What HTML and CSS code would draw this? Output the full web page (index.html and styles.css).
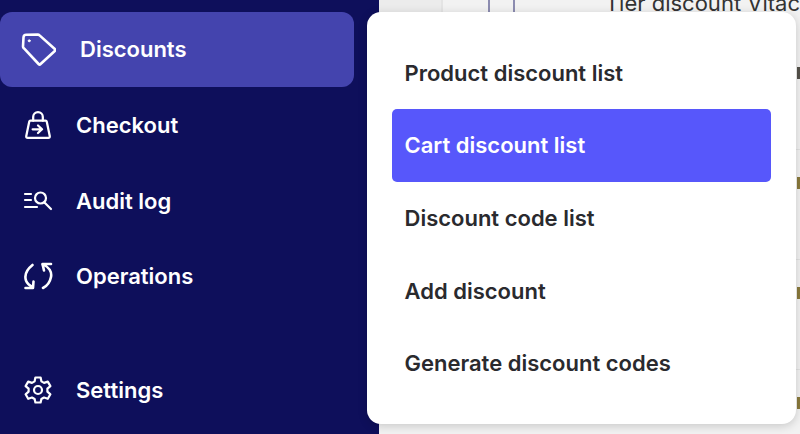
FILE: index.html
```html
<!DOCTYPE html>
<html lang="en">
<head>
<meta charset="utf-8">
<title>Discounts menu</title>
<link rel="stylesheet" href="styles.css">
</head>
<body>
<div class="app">
  <nav class="sidebar">
    <a class="nav-item active">
      <svg class="icon tag" viewBox="0 0 36 36" fill="none" stroke="#fff" stroke-width="2.6" stroke-linejoin="round" stroke-linecap="round"><path d="M3.5 5.5 L3 14.5 Q3 15.5 3.8 16.2 L18.6 32 Q19.6 33 20.6 32 L34.8 19 Q35.6 18 34.8 17 L19.6 3.4 Q18.8 2.6 17.8 2.6 L6.2 2.8 Q3.6 2.8 3.5 5.5 Z"/><circle cx="9.2" cy="8.8" r="1" fill="#fff" stroke-width="1"/></svg>
      <span>Discounts</span>
    </a>
    <a class="nav-item">
      <svg class="icon" viewBox="0 0 26 28" fill="none" stroke="#fff" stroke-width="2.1" stroke-linejoin="round" stroke-linecap="round"><path d="M8.5 10 V6.5 A4.5 4.5 0 0 1 17.5 6.5 V10"/><path d="M6 10 H20 Q21 10 21.2 11 L24 24.5 Q24.2 26 22.6 26 H3.4 Q1.8 26 2 24.5 L4.8 11 Q5 10 6 10 Z"/><path d="M8 18 H16.5 M13 14.5 L16.8 18 L13 21.5"/></svg>
      <span>Checkout</span>
    </a>
    <a class="nav-item short">
      <svg class="icon" viewBox="0 0 30 24" fill="none" stroke="#fff" stroke-width="2.2" stroke-linecap="round"><path d="M2 5 H8 M2 11 H8 M2 18 H14"/><circle cx="17.5" cy="9" r="5.5"/><path d="M21.5 13.5 L28 20"/></svg>
      <span>Audit log</span>
    </a>
    <a class="nav-item">
      <svg class="icon" viewBox="0 0 30 30" fill="none" stroke="#fff" stroke-width="2.6" stroke-linecap="round" stroke-linejoin="round"><path d="M9.5 4 C4.5 8 1 13.5 3 19.5 Q4.5 23.5 9.5 26"/><path d="M2.5 27 H10 L10.5 20.5"/><path d="M20 3.5 C26 5.5 29 11 28 16 C27 21 24 25 20 27"/><path d="M28 3 H19.5 L21 9.5"/></svg>
      <span>Operations</span>
    </a>
    <a class="nav-item bottom">
      <svg class="icon" viewBox="0 0 30 30" fill="none" stroke="#fff" stroke-width="2.2" stroke-linejoin="round"><path d="M12.4 2.5 H17.6 L18.4 6.4 L21 7.9 L24.8 6.6 L27.4 11.1 L24.4 13.7 V16.7 L27.4 19.3 L24.8 23.8 L21 22.5 L18.4 24 L17.6 27.5 H12.4 L11.6 24 L9 22.5 L5.2 23.8 L2.6 19.3 L5.6 16.7 V13.7 L2.6 11.1 L5.2 6.6 L9 7.9 L11.6 6.4 Z"/><circle cx="15" cy="15" r="4"/></svg>
      <span>Settings</span>
    </a>
  </nav>
  <main class="content">
    <div class="columns">
      <div class="col-a"></div>
      <div class="col-b"></div>
      <div class="col-c"></div>
      <div class="col-d">Tier discount Vitac</div>
    </div>
    <div class="row first"><i class="mark dark"></i></div>
    <div class="row"><i class="mark"></i></div>
    <div class="row"><i class="mark"></i></div>
    <div class="row last"><i class="mark"></i></div>
  </main>
  <div class="menu">
    <a class="menu-item">Product discount list</a>
    <a class="menu-item selected">Cart discount list</a>
    <a class="menu-item">Discount code list</a>
    <a class="menu-item">Add discount</a>
    <a class="menu-item">Generate discount codes</a>
  </div>
</div>
</body>
</html>
```
FILE: styles.css
```css
* { box-sizing: border-box; }
html, body { margin: 0; height: 100%; overflow: hidden; }
body { font-family: Inter, "Liberation Sans", sans-serif; }
.app { display: flex; width: 800px; height: 434px; position: relative; overflow: hidden; }
.sidebar {
  width: 379px;
  background: #0e0f5b;
  display: flex;
  flex-direction: column;
  padding: 12px 25px 0 0;
  flex: none;
}
.nav-item {
  display: flex;
  align-items: center;
  height: 76px;
  color: #fff;
  font-weight: 600;
  font-size: 22px;
}
.nav-item.short { height: 75px; }
.nav-item .icon { width: 30px; height: 30px; margin-left: 23px; margin-right: 23px; flex: none; }
.nav-item.active {
  height: 75px;
  background: #4444ae;
  border-radius: 12px;
}
.nav-item.active span { margin-top: -1px; }
.nav-item.active .icon { width: 36px; height: 36px; margin-left: 20px; margin-right: 24px; }
.nav-item.bottom { margin-top: 38px; }
.content { flex: 1; background: #f2f2f2; overflow: hidden; display: flex; flex-direction: column; }
.columns { display: flex; height: 12px; flex: none; }
.col-a { width: 65px; border-right: 2px solid #e4e4e4; background: #ececec; }
.col-b { width: 48px; border-right: 2px solid #8c8cb0; }
.col-c { width: 25px; border-right: 2px solid #8c8cb0; }
.col-d {
  font-size: 22px;
  line-height: 12px;
  color: #333;
  padding-left: 90px;
  white-space: nowrap;
  margin-top: -3px;
}
.row {
  height: 110px;
  flex: none;
  display: flex;
  justify-content: flex-end;
  padding: 27px 0 0;
  border-bottom: 1px solid #e2e2e2;
}
.row.first { height: 138px; padding-top: 55px; }
.row.last { border-bottom: 0; }
.mark { width: 3px; height: 12px; background: #8a7a3c; }
.mark.dark { background: #55524a; }
.menu {
  position: absolute;
  left: 367px;
  top: 12px;
  width: 429px;
  height: 412px;
  background: #fff;
  border-radius: 14px;
  box-shadow: 0 2px 10px rgba(0,0,0,.18);
  padding: 24.6px 25px;
  display: flex;
  flex-direction: column;
}
.menu-item {
  display: flex;
  align-items: center;
  height: 72.8px;
  padding-left: 12.5px;
  font-size: 22px;
  font-weight: 600;
  color: #2a2a2e;
  border-radius: 5px;
}
.menu-item.selected { background: #5757fb; color: #fff; }
```
